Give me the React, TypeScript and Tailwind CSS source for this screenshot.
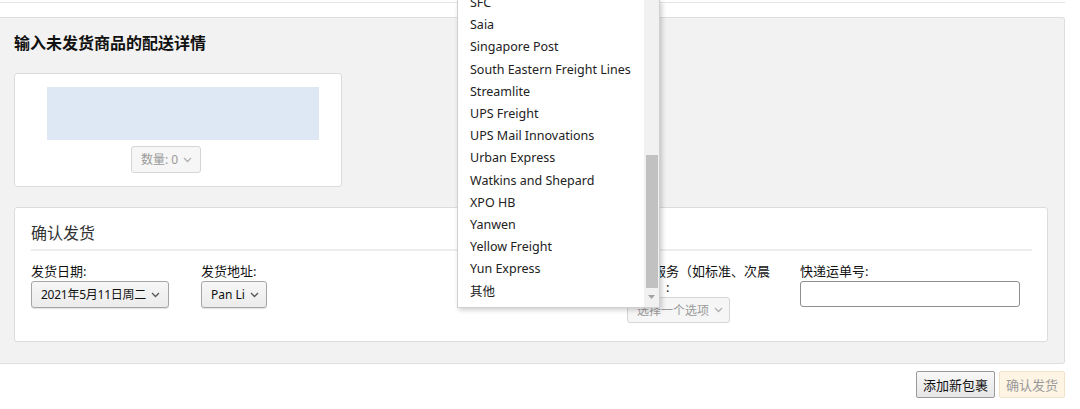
import React from "react";

const carriers = [
  "SFC",
  "Saia",
  "Singapore Post",
  "South Eastern Freight Lines",
  "Streamlite",
  "UPS Freight",
  "UPS Mail Innovations",
  "Urban Express",
  "Watkins and Shepard",
  "XPO HB",
  "Yanwen",
  "Yellow Freight",
  "Yun Express",
  "其他",
];

function Chevron({ className = "" }: { className?: string }) {
  return (
    <svg width="9" height="6" viewBox="0 0 9 6" className={className}>
      <path d="M1 1 L4.5 4.5 L8 1" fill="none" stroke="currentColor" strokeWidth="1.3" />
    </svg>
  );
}

function NativeSelect({
  label,
  className = "",
  labelClass = "",
  disabled = false,
}: {
  label: string;
  className?: string;
  labelClass?: string;
  disabled?: boolean;
}) {
  return (
    <div
      className={
        "flex items-center justify-between rounded-[3px] border pl-[9px] pr-[8px] text-[12px] " +
        (disabled
          ? "border-[#d5d5d5] bg-[#f6f6f6] text-[#9a9a9a] "
          : "border-[#a6a6a6] bg-gradient-to-b from-[#f7f7f7] to-[#ebebeb] text-[#111] shadow-[0_1px_1px_rgba(0,0,0,0.12)] ") +
        className
      }
    >
      <span className={"whitespace-nowrap " + labelClass}>{label}</span>
      <Chevron className={disabled ? "ml-[5px] shrink-0 text-[#b0b0b0]" : "ml-[5px] shrink-0 text-[#555]"} />
    </div>
  );
}

export default function App() {
  return (
    <div className="relative w-[1080px] h-[409px] bg-white font-['Noto_Sans','Noto_Sans_CJK_SC',sans-serif] text-[#111] overflow-hidden">
      {/* top box edge */}
      <div className="w-[1065px] h-[3px] border-b border-[#e4e4e4]" />

      {/* main gray panel */}
      <div className="mt-[14px] w-[1065px] h-[347px] bg-[#f2f2f2] border border-l-0 border-[#dedede] rounded-r-[3px] pl-[14px] pt-[12px]">
        <h2 className="text-[16px] leading-[24px] font-bold text-[#111] font-['Noto_Sans_CJK_SC',sans-serif]">
          输入未发货商品的配送详情
        </h2>

        {/* item card */}
        <div className="mt-[19px] w-[328px] h-[114px] bg-white border border-[#dcdcdc] rounded-[3px] pt-[13px]">
          <div className="ml-[32px] w-[272px] h-[53px] bg-[#dde8f4]" />
          <div className="ml-[116px] mt-[6px]">
            <NativeSelect label="数量: 0" disabled className="w-[70px] h-[27px]" />
          </div>
        </div>

        {/* confirm card */}
        <div className="mt-[20px] w-[1034px] h-[135px] bg-white border border-[#dcdcdc] rounded-[3px] pl-[16px] pr-[15px] pt-[12px]">
          <div className="text-[16px] leading-[24px] text-[#333] border-b-2 border-[#ececec] pb-[5px] font-['Noto_Sans_CJK_SC',sans-serif]">
            确认发货
          </div>
          <div className="flex mt-[12px] text-[13px] leading-[17px] text-[#111]">
            <div className="w-[170px]">
              <div>发货日期:</div>
              <NativeSelect
                label="2021年5月11日周二"
                labelClass="tracking-[-0.25px]"
                className="mt-[1px] w-[138px] h-[27px]"
              />
            </div>
            <div className="w-[256px]">
              <div>发货地址:</div>
              <NativeSelect label="Pan Li" className="mt-[1px] w-[66px] h-[27px]" />
            </div>
            <div className="w-[170px]" />
            <div className="w-[173px]">
              <div className="w-[148px] leading-[16px]">配送服务（如标准、次晨送达）:</div>
              <NativeSelect label="选择一个选项" disabled className="mt-[2px] w-[103px] h-[26px]" />
            </div>
            <div>
              <div>快递运单号:</div>
              <div className="mt-[1px] w-[220px] h-[26px] border border-[#8f8f8f] rounded-[3px] bg-white" />
            </div>
          </div>
        </div>
      </div>

      {/* bottom buttons */}
      <div className="w-[1065px] flex justify-end gap-[4px] mt-[7px] text-[13px] font-['Noto_Sans_CJK_SC',sans-serif]">
        <button className="h-[27px] px-[6px] border border-[#9a9a9a] rounded-[2px] bg-gradient-to-b from-[#f8f8f8] to-[#e6e6e6] text-[#111]">
          添加新包裹
        </button>
        <button className="h-[27px] px-[6px] border border-[#f1e3c8] rounded-[2px] bg-[#fdf4e4] text-[#9a9a9a]">
          确认发货
        </button>
      </div>

      {/* open dropdown list */}
      <div className="absolute left-[457px] top-0 w-[203px] h-[308px] bg-white border border-[#d0d0d0] border-t-0 shadow-[2px_2px_5px_rgba(0,0,0,0.2)] overflow-hidden">
        <ul className="-mt-[8px] pl-[12px] text-[12.5px] leading-[22.2px] text-[#222]">
          {carriers.map((c) => (
            <li key={c} className="whitespace-nowrap">
              {c}
            </li>
          ))}
        </ul>
        {/* scrollbar */}
        <div className="absolute right-0 top-0 w-[15px] h-full bg-[#f1f1f1] flex flex-col items-center">
          <div className="mt-[155px] w-[12px] h-[133px] bg-[#c1c1c1]" />
          <svg width="7" height="4" viewBox="0 0 7 4" className="mt-[7px]">
            <path d="M0 0 L7 0 L3.5 4 Z" fill="#a3a3a3" />
          </svg>
        </div>
      </div>
    </div>
  );
}
